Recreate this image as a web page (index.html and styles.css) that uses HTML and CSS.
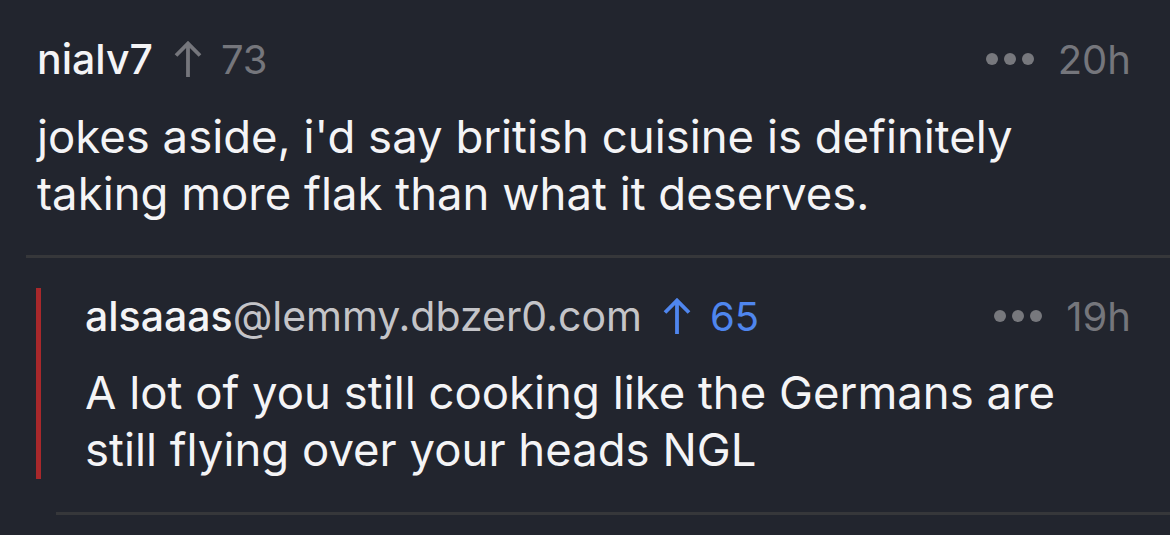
FILE: index.html
```html
<!DOCTYPE html>
<html>
<head>
<meta charset="utf-8">
<link rel="stylesheet" href="styles.css">
</head>
<body>
<div class="thread">
  <div class="comment">
    <div class="meta">
      <div class="meta-left">
        <span class="user">nialv7</span>
        <span class="score">
          <svg class="arrow" viewBox="0 0 28 38" width="28" height="38"><path d="M14 37V3.5M2 15.5L14 3.5l12 12" fill="none" stroke="currentColor" stroke-width="3.8" stroke-linecap="butt" stroke-linejoin="miter"/></svg>
          <span>73</span>
        </span>
      </div>
      <div class="meta-right">
        <span class="dots"><i></i><i></i><i></i></span>
        <span class="time">20h</span>
      </div>
    </div>
    <p class="body">jokes aside, i'd say british cuisine is definitely taking more flak than what it deserves.</p>
  </div>
  <div class="divider top-divider"></div>
  <div class="reply">
    <div class="reply-inner">
      <div class="meta">
        <div class="meta-left">
          <span class="user">alsaaas<span class="instance">@lemmy.dbzer0.com</span></span>
          <span class="score up">
            <svg class="arrow" viewBox="0 0 28 38" width="28" height="38"><path d="M14 37V3.5M2 15.5L14 3.5l12 12" fill="none" stroke="currentColor" stroke-width="3.8" stroke-linecap="butt" stroke-linejoin="miter"/></svg>
            <span>65</span>
          </span>
        </div>
        <div class="meta-right">
          <span class="dots"><i></i><i></i><i></i></span>
          <span class="time">19h</span>
        </div>
      </div>
      <p class="body">A lot of you still cooking like the Germans are still flying over your heads NGL</p>
    </div>
  </div>
  <div class="divider reply-divider"></div>
</div>
</body>
</html>
```

FILE: styles.css
```css
html, body {
  margin: 0;
  padding: 0;
  background: #22252e;
}
body {
  font-family: Inter, "Noto Sans", sans-serif;
  color: #f4f4f6;
  width: 1170px;
  height: 535px;
  overflow: hidden;
}
.comment {
  padding: 34px 39px 0 37px;
}
.meta {
  display: flex;
  justify-content: space-between;
  align-items: center;
  height: 50px;
}
.meta-left, .meta-right {
  display: flex;
  align-items: center;
}
.user {
  font-size: 41px;
  font-weight: 500;
  color: #f4f4f6;
}
.instance {
  color: #c4c4c8;
  font-weight: 400;
}
.score {
  display: flex;
  align-items: center;
  margin-left: 21px;
  color: #75767c;
  font-size: 40px;
  gap: 19px;
}
.score.up {
  color: #4f86ee;
}
.arrow {
  display: block;
}
.dots {
  display: flex;
  gap: 6px;
  margin-right: 24px;
}
.dots i {
  display: block;
  width: 12px;
  height: 12px;
  border-radius: 50%;
  background: #77787d;
}
.time {
  font-size: 40px;
  color: #75767c;
}
.body {
  margin: 24px 0 0 0;
  font-size: 45.5px;
  line-height: 57px;
}
.divider {
  height: 3px;
  background: #36373a;
}
.top-divider {
  margin: 33px 0 0 26px;
}
.reply {
  padding: 30px 39px 0 36px;
}
.reply-inner {
  border-left: 5px solid #a8282b;
  padding-left: 44px;
  padding-top: 3px;
  padding-bottom: 1px;
}
.reply-inner .body {
  margin-top: 23px;
}
.reply-divider {
  margin: 33px 0 0 56px;
}
```
